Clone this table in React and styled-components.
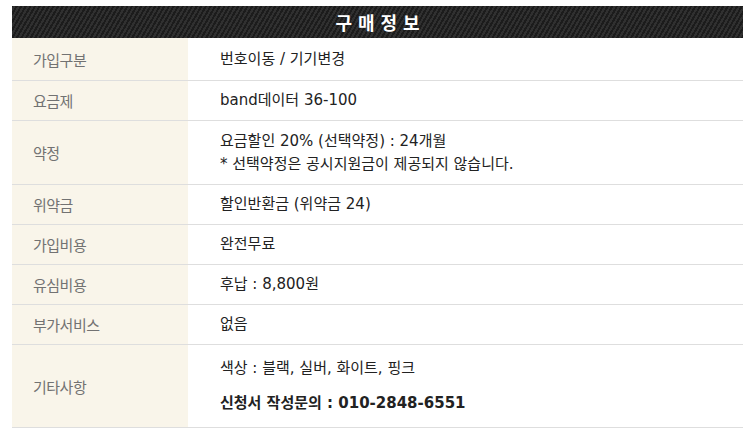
import React from 'react';
import styled, { createGlobalStyle } from 'styled-components';

const GlobalStyle = createGlobalStyle`
  body {
    margin: 0;
    background: #fff;
    font-family: "Noto Sans CJK KR", "Noto Sans", sans-serif;
  }
`;

// --- 레이아웃 ---
const Wrapper = styled.div`
  padding: 6px 12px 0 12px;
  width: 731px;
`;

const Header = styled.div`
  height: 32px;
  display: flex;
  align-items: center;
  justify-content: center;
  background-color: #1f1f1f;
  background-image: repeating-linear-gradient(
    -60deg,
    #1c1c1c 0px,
    #1c1c1c 2px,
    #303030 2px,
    #303030 4px
  );
  color: #fff;
  font-size: 18px;
  font-weight: 700;
  letter-spacing: 6px;
  text-indent: 6px;
`;

const Table = styled.div`
  display: grid;
  grid-template-columns: 176px 1fr;
`;

const Label = styled.div`
  background: #f9f5ea;
  color: #727272;
  font-size: 15px;
  letter-spacing: -0.5px;
  display: flex;
  align-items: center;
  padding-left: 21px;
  height: ${props => props.h}px;
  border-bottom: 1px solid #dedede;
  box-sizing: border-box;
`;

const Value = styled.div`
  color: #222;
  font-family: "DejaVu Sans", "Noto Sans CJK KR", sans-serif;
  font-size: 15px;
  display: flex;
  flex-direction: column;
  justify-content: center;
  gap: ${props => props.gap || 0}px;
  padding-left: 32px;
  height: ${props => props.h}px;
  border-bottom: 1px solid #dedede;
  box-sizing: border-box;
`;

const Line = styled.div`
  font-weight: ${props => (props.bold ? 700 : 400)};
  line-height: 23px;
`;

const rows = [
  { label: '가입구분', h: 43, lines: ['번호이동 / 기기변경'] },
  { label: '요금제', h: 40, lines: ['band데이터 36-100'] },
  {
    label: '약정',
    h: 64,
    lines: ['요금할인 20% (선택약정) : 24개월', '* 선택약정은 공시지원금이 제공되지 않습니다.'],
  },
  { label: '위약금', h: 40, lines: ['할인반환금 (위약금 24)'] },
  { label: '가입비용', h: 40, lines: ['완전무료'] },
  { label: '유심비용', h: 40, lines: ['후납 : 8,800원'] },
  { label: '부가서비스', h: 40, lines: ['없음'] },
  {
    label: '기타사항',
    h: 83,
    gap: 12,
    lines: ['색상 : 블랙, 실버, 화이트, 핑크', { text: '신청서 작성문의 : 010-2848-6551', bold: true }],
  },
];

const App = () => (
  <>
    <GlobalStyle />
    <Wrapper>
      <Header>구매정보</Header>
      <Table>
        {rows.map(row => (
          <React.Fragment key={row.label}>
            <Label h={row.h}>{row.label}</Label>
            <Value h={row.h} gap={row.gap}>
              {row.lines.map((l, i) =>
                typeof l === 'string' ? (
                  <Line key={i}>{l}</Line>
                ) : (
                  <Line key={i} bold>{l.text}</Line>
                )
              )}
            </Value>
          </React.Fragment>
        ))}
      </Table>
    </Wrapper>
  </>
);

export default App;
